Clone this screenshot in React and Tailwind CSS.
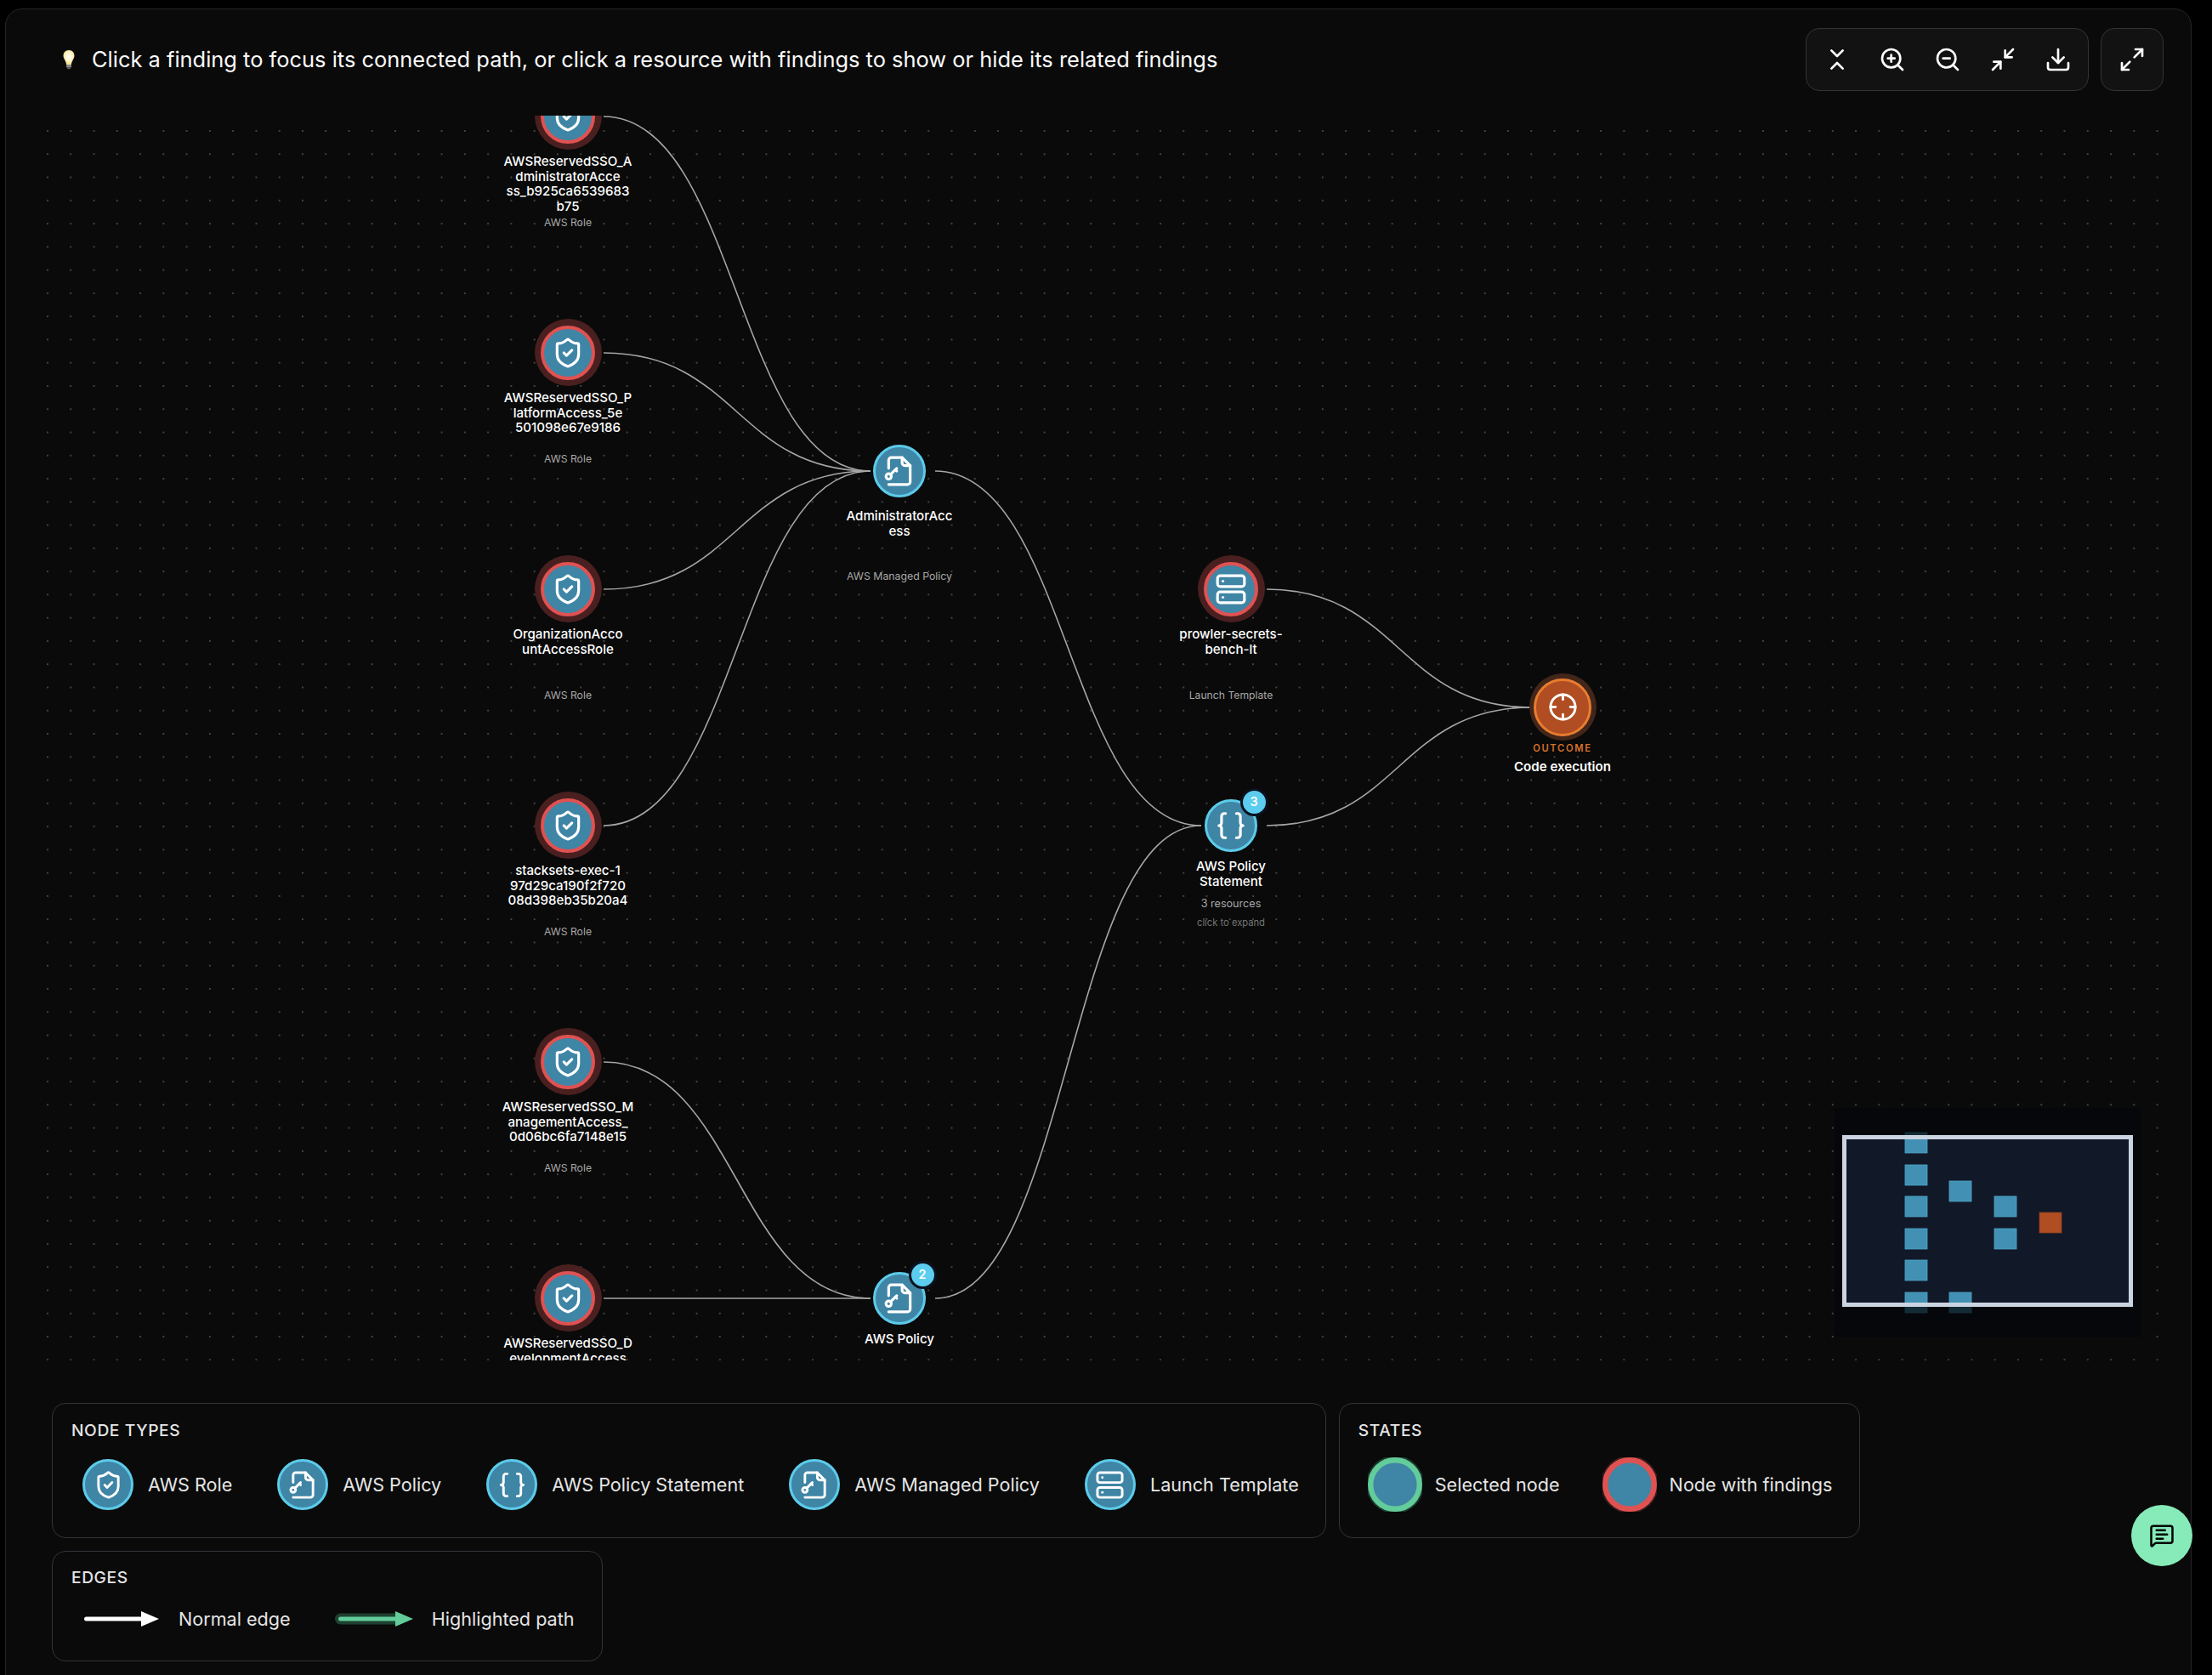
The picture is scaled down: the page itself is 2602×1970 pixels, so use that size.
import React from "react";
import {
  Braces,
  ChevronsDownUp,
  Crosshair,
  Download,
  Maximize2,
  MessageSquareText,
  Minimize2,
  Server,
  ShieldCheck,
  ZoomIn,
  ZoomOut,
} from "lucide-react";

// graph area origin in page pixels, node data below is in page pixels
const OX = 30;
const OY = 136;

function FileKeyIcon({ size = 38 }) {
  return (
    <svg
      width={size}
      height={size}
      viewBox="0 0 24 24"
      fill="none"
      stroke="currentColor"
      strokeWidth="2"
      strokeLinecap="round"
      strokeLinejoin="round"
    >
      <path d="M4 10V4a2 2 0 0 1 2-2h8l6 6v12a2 2 0 0 1-2 2H4" />
      <path d="M14 2v4a2 2 0 0 0 2 2h4" />
      <circle cx="4" cy="16" r="2" />
      <path d="m10 10-4.5 4.5" />
      <path d="m9 11 1 1" />
    </svg>
  );
}

function Bulb() {
  return (
    <svg width="18" height="24" viewBox="0 0 18 24" className="shrink-0">
      <defs>
        <radialGradient id="bulbGlow" cx="50%" cy="45%" r="60%">
          <stop offset="0%" stopColor="#ffffff" />
          <stop offset="55%" stopColor="#fdf3c4" />
          <stop offset="100%" stopColor="#f2d774" />
        </radialGradient>
      </defs>
      <path
        d="M9 1C4.6 1 2.5 4.4 2.5 7.6c0 3.6 3 5.6 3.6 10.4h5.8c.6-4.8 3.6-6.8 3.6-10.4C15.5 4.4 13.4 1 9 1z"
        fill="url(#bulbGlow)"
      />
      <rect x="6" y="18" width="6" height="3.4" rx="1" fill="#8a8a86" />
      <rect x="7" y="21.4" width="4" height="1.8" rx="0.9" fill="#5d5d5a" />
    </svg>
  );
}

const edges = [
  [710, 137, 1024, 554],
  [710, 415, 1024, 554],
  [710, 693, 1024, 554],
  [710, 971, 1024, 554],
  [710, 1249, 1024, 1527],
  [710, 1527, 1024, 1527],
  [1100, 554, 1413, 971],
  [1100, 1527, 1413, 971],
  [1490, 693, 1801, 832],
  [1490, 971, 1801, 832],
];

const roles = [
  { y: 137, lines: ["AWSReservedSSO_A", "dministratorAcce", "ss_b925ca6539683", "b75"], type: "AWS Role" },
  { y: 415, lines: ["AWSReservedSSO_P", "latformAccess_5e", "501098e67e9186"], type: "AWS Role" },
  { y: 693, lines: ["OrganizationAcco", "untAccessRole"], type: "AWS Role" },
  { y: 971, lines: ["stacksets-exec-1", "97d29ca190f2f720", "08d398eb35b20a4"], type: "AWS Role" },
  { y: 1249, lines: ["AWSReservedSSO_M", "anagementAccess_", "0d06bc6fa7148e15"], type: "AWS Role" },
  // last one runs past the bottom of the graph area
  { y: 1527, lines: ["AWSReservedSSO_D", "evelopmentAccess"] },
];

const miniNodes = [
  [2241, 1332], [2241, 1370], [2241, 1407], [2241, 1445], [2241, 1482], [2241, 1520],
  [2293, 1389], [2293, 1520], [2346, 1407], [2346, 1445],
];

function Label({ lines }) {
  return (
    <div className="text-center text-[15.1px] leading-[17.7px] font-medium text-white whitespace-nowrap">
      {lines.map((l) => (
        <div key={l}>{l}</div>
      ))}
    </div>
  );
}

// findings node: red ring with dim halo, label block starts below the circle
function FindingNode({ x, y, icon, lines, type }) {
  return (
    <div
      className="absolute w-[200px] -ml-[100px] -mt-[40px] flex flex-col items-center"
      style={{ left: x - OX, top: y - OY }}
    >
      <div className="w-[79px] h-[79px] rounded-full bg-[#4a1f1f] flex items-center justify-center">
        <div className="w-[64px] h-[64px] rounded-full border-4 border-[#e05252] bg-[#3f85a5] text-white flex items-center justify-center">
          {icon}
        </div>
      </div>
      <div className="mt-[5px] h-[70.5px]">
        <Label lines={lines} />
      </div>
      {type && <div className="text-[12.2px] leading-[19px] text-[#a8a8a8] whitespace-nowrap">{type}</div>}
    </div>
  );
}

function PolicyNode({ x, y, icon, lines, badge, children }) {
  return (
    <div
      className="absolute w-[200px] -ml-[100px] -mt-[31px] flex flex-col items-center"
      style={{ left: x - OX, top: y - OY }}
    >
      <div className="relative w-[62px] h-[62px] rounded-full border-[3px] border-[#5ccbe9] bg-[#3f85a5] text-white flex items-center justify-center">
        {icon}
        {badge && (
          <div className="absolute left-[38.5px] -top-[16.5px] w-[33px] h-[33px] rounded-full border-[3px] border-[#0a1220] bg-[#5ccdee] text-[14.4px] font-semibold text-white flex items-center justify-center">
            {badge}
          </div>
        )}
      </div>
      <div className="mt-[8px]">
        <Label lines={lines} />
      </div>
      {children}
    </div>
  );
}

function Legend({ title, children }) {
  return (
    <div className="rounded-[16px] border border-[#33333a] pl-[22px] pr-[18px] pt-[18px] pb-[30px]">
      <div className="h-[26px] leading-[26px] text-[19.2px] font-medium tracking-[0.6px] text-[#e5e5e5]">
        {title}
      </div>
      {children}
    </div>
  );
}

function LegendType({ icon, children }) {
  return (
    <div className="flex items-center gap-[17px] px-[13px]">
      <div className="w-[60px] h-[60px] rounded-full border-[3px] border-[#5ccbe9] bg-[#3f85a5] text-white flex items-center justify-center">
        {icon}
      </div>
      <span className="text-[21.6px] text-[#e5e5e5] whitespace-nowrap">{children}</span>
    </div>
  );
}

function LegendState({ ring, halo, children }) {
  return (
    <div className="flex items-center gap-[15px] px-[11px]">
      <svg width="64" height="64" viewBox="0 0 64 64" className="shrink-0">
        <circle cx="32" cy="32" r="34" fill={halo} />
        <circle cx="32" cy="32" r="28.8" fill="#3f85a5" stroke={ring} strokeWidth="6.4" />
      </svg>
      <span className="text-[21.6px] text-[#e5e5e5] whitespace-nowrap">{children}</span>
    </div>
  );
}

export default function App() {
  return (
    <div className="h-[1970px] overflow-hidden bg-black pt-[10px] pl-[6px] pr-[24px] [font-family:Inter,sans-serif]">
      <div className="rounded-[20px] border border-[#26262a] bg-[#0a0a0a] px-[23px] pt-[22px] pb-[60px]">
        <div className="flex items-center justify-between h-[74px] pl-[42px] pr-[9px]">
          <div className="flex items-center gap-[18px]">
            <Bulb />
            <span className="text-[25.45px] text-[#fafafa] whitespace-nowrap">
              Click a finding to focus its connected path, or click a resource with findings to show or hide its related findings
            </span>
          </div>
          <div className="flex gap-[14px] text-white">
            <div className="flex items-center h-[74px] px-[3px] rounded-[16px] border border-[#33333a] bg-[#121212]">
              {[ChevronsDownUp, ZoomIn, ZoomOut, Minimize2, Download].map((Icon, i) => (
                <button key={i} className="w-[65px] h-[65px] flex items-center justify-center">
                  <Icon size={32} strokeWidth={2} />
                </button>
              ))}
            </div>
            <button className="w-[74px] h-[74px] rounded-[16px] border border-[#33333a] bg-[#121212] flex items-center justify-center">
              <Maximize2 size={32} strokeWidth={2} />
            </button>
          </div>
        </div>

        <div className="relative mt-[29px] h-[1464px] overflow-hidden">
          <svg className="absolute inset-0 w-full h-full" viewBox={`${OX} ${OY} 2524 1464`}>
            <defs>
              <pattern
                id="dots"
                patternUnits="userSpaceOnUse"
                x="42.36"
                y="140.36"
                width="27.27"
                height="27.27"
              >
                <circle cx="13.64" cy="13.64" r="1" fill="#555555" />
              </pattern>
            </defs>
            <rect x="42.36" y="140.36" width="2509" height="1460" fill="url(#dots)" />
            {edges.map(([x0, y0, x1, y1], i) => {
              const mx = (x0 + x1) / 2;
              return (
                <path
                  key={i}
                  d={`M${x0} ${y0} C${mx} ${y0} ${mx} ${y1} ${x1} ${y1}`}
                  fill="none"
                  stroke="#a6a6a6"
                  strokeWidth="1.6"
                />
              );
            })}
          </svg>

          {roles.map((r) => (
            <FindingNode
              key={r.y}
              x={668}
              y={r.y}
              lines={r.lines}
              type={r.type}
              icon={<ShieldCheck size={38} strokeWidth={2} />}
            />
          ))}

          <FindingNode
            x={1448}
            y={693}
            lines={["prowler-secrets-", "bench-lt"]}
            type="Launch Template"
            icon={<Server size={38} strokeWidth={2} />}
          />

          <div
            className="absolute w-[200px] -ml-[100px] -mt-[31px] flex flex-col items-center"
            style={{ left: 1058 - OX, top: 554 - OY }}
          >
            <div className="w-[62px] h-[62px] rounded-full border-[3px] border-[#5ccbe9] bg-[#3f85a5] text-white flex items-center justify-center">
              <FileKeyIcon />
            </div>
            <div className="mt-[13px] h-[53px]">
              <Label lines={["AdministratorAcc", "ess"]} />
            </div>
            <div className="mt-[17px] text-[12.3px] leading-[19px] text-[#a8a8a8] whitespace-nowrap">
              AWS Managed Policy
            </div>
          </div>

          <PolicyNode
            x={1448}
            y={971}
            badge="3"
            lines={["AWS Policy", "Statement"]}
            icon={<Braces size={38} strokeWidth={2} />}
          >
            <div className="mt-[8px] text-[12.6px] leading-[19px] text-[#a8a8a8]">3 resources</div>
            <div className="mt-[4px] text-[11.2px] leading-[19px] text-[#757575]">click to expand</div>
          </PolicyNode>

          <PolicyNode x={1058} y={1527} badge="2" lines={["AWS Policy"]} icon={<FileKeyIcon />} />

          <div
            className="absolute w-[200px] -ml-[100px] -mt-[40px] flex flex-col items-center"
            style={{ left: 1838 - OX, top: 832 - OY }}
          >
            <div className="w-[79px] h-[79px] rounded-full bg-[#43261a] flex items-center justify-center">
              <div className="w-[68px] h-[68px] rounded-full border-[3px] border-[#e87d2f] bg-[#b04d22] text-white flex items-center justify-center">
                <Crosshair size={35} strokeWidth={2} />
              </div>
            </div>
            <div className="mt-[2px] text-[11.2px] leading-[14px] font-semibold tracking-[1.7px] text-[#d9712a]">
              OUTCOME
            </div>
            <div className="mt-[5px] text-[15.1px] leading-[20px] font-semibold text-white whitespace-nowrap">
              Code execution
            </div>
          </div>

          {/* minimap */}
          <svg
            className="absolute left-[2128px] bottom-[27px]"
            width="360"
            height="270"
            viewBox="2158 1303 360 270"
          >
            <rect x="2158" y="1303" width="360" height="270" fill="#111827" />
            {miniNodes.map(([x, y]) => (
              <rect key={`${x}-${y}`} x={x} y={y} width="26" height="24" fill="#4290b3" stroke="#4fa6cb" strokeWidth="0.8" />
            ))}
            <rect x="2399" y="1426" width="26" height="24" fill="#b04d22" stroke="#8a3f1f" strokeWidth="0.8" />
            <path
              d="M2158 1303h360v270h-360z M2169.5 1337.5v197h337v-197z"
              fillRule="evenodd"
              fill="#000000"
              fillOpacity="0.7"
            />
            <rect x="2169.5" y="1337.5" width="337" height="197" fill="none" stroke="#cbd5e1" strokeWidth="5" />
          </svg>
        </div>

        <div className="mt-[50px] ml-[31px] flex flex-wrap gap-x-[15px] gap-y-[15px]">
          <Legend title="NODE TYPES">
            <div className="mt-[19px] flex h-[64px] items-center gap-[27px]">
              <LegendType icon={<ShieldCheck size={35} strokeWidth={2} />}>AWS Role</LegendType>
              <LegendType icon={<FileKeyIcon size={35} />}>AWS Policy</LegendType>
              <LegendType icon={<Braces size={35} strokeWidth={2} />}>AWS Policy Statement</LegendType>
              <LegendType icon={<FileKeyIcon size={35} />}>AWS Managed Policy</LegendType>
              <LegendType icon={<Server size={35} strokeWidth={2} />}>Launch Template</LegendType>
            </div>
          </Legend>
          <Legend title="STATES">
            <div className="mt-[19px] flex h-[64px] items-center gap-[28px] pr-[3px]">
              <LegendState ring="#62cc9a" halo="#1c3a2c">Selected node</LegendState>
              <LegendState ring="#e05252" halo="#3c1c1c">Node with findings</LegendState>
            </div>
          </Legend>
          <div className="rounded-[16px] border border-[#33333a] pl-[22px] pr-[32px] pt-[17px] pb-[33px]">
            <div className="h-[26px] leading-[26px] text-[19.2px] font-medium tracking-[0.6px] text-[#e5e5e5]">
              EDGES
            </div>
            <div className="mt-[20px] flex h-[32px] items-center pl-[15px]">
              <svg width="88" height="32" viewBox="0 0 88 32" className="shrink-0">
                <path d="M2.5 16H68" stroke="#ffffff" strokeWidth="5" strokeLinecap="round" />
                <path d="M67 7l21 9-21 9z" fill="#ffffff" />
              </svg>
              <span className="ml-[23px] text-[21.6px] text-[#e5e5e5] whitespace-nowrap">Normal edge</span>
              <svg width="92" height="32" viewBox="0 0 92 32" className="ml-[52px] shrink-0">
                <path d="M6.5 16H72" stroke="#1e4030" strokeWidth="13" strokeLinecap="round" />
                <path d="M6.5 16H72" stroke="#62cc9a" strokeWidth="5" strokeLinecap="round" />
                <path d="M71 7l21 9-21 9z" fill="#62cc9a" />
              </svg>
              <span className="ml-[22px] text-[21.6px] text-[#e5e5e5] whitespace-nowrap">Highlighted path</span>
            </div>
          </div>
        </div>
      </div>

      <button className="fixed right-[23px] bottom-[128px] w-[72px] h-[72px] rounded-full bg-[#86ebb8] text-black flex items-center justify-center">
        <MessageSquareText size={30} strokeWidth={2} />
      </button>
    </div>
  );
}
